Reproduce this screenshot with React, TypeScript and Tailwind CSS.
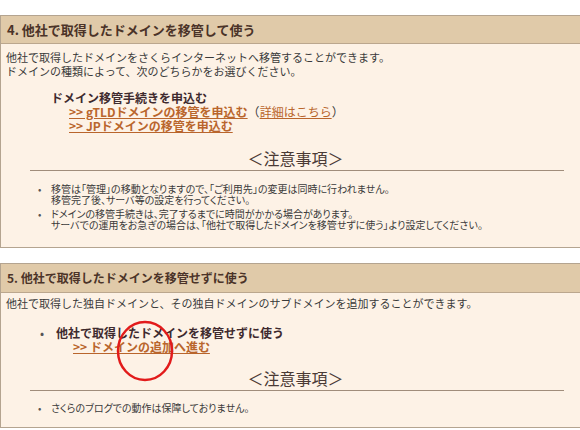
const font = "font-['Noto_Sans_CJK_JP','Noto_Sans',sans-serif]";

function Notice({ items }: { items: string[][] }) {
    return (
        <>
            <div className="mt-[15px] text-center text-[16px] leading-[20px] text-[#4a3a35]">＜注意事項＞</div>
            <div className="mt-[2px] ml-[24px] mr-[21px] h-px bg-[#a08d7b]" />
            <ul className="mt-[12px] flex flex-col gap-[3px] pl-[32px] text-[10px] leading-[11px] text-[#3a3a3a] [font-feature-settings:'palt']">
                {items.map((lines, i) => (
                    <li key={i} className="flex">
                        <span className="w-[13px] shrink-0 text-[#555]">•</span>
                        <span>
                            {lines.map((l, j) => (
                                <div key={j}>{l}</div>
                            ))}
                        </span>
                    </li>
                ))}
            </ul>
        </>
    );
}

export default function App() {
    return (
        <div className={`h-[430px] w-[580px] overflow-hidden bg-white pt-[15px] ${font}`}>
            <section className="w-[590px] border-y border-l border-[#b4a490] bg-[#fdf2e6]">
                <h2 className="flex h-[28px] items-center border-b border-[#bba78e] bg-[#e0caa9] px-[6px] text-[13px] font-bold text-[#4b3328]">
                    4. 他社で取得したドメインを移管して使う
                </h2>
                <div className="px-[5px] pt-[6px] pb-[17px]">
                    <p className="text-[11px] leading-[14px] text-[#3a3a3a]">
                        他社で取得したドメインをさくらインターネットへ移管することができます。
                        <br />
                        ドメインの種類によって、次のどちらかをお選びください。
                    </p>
                    <div className="mt-[13px] pl-[45px] text-[12px] leading-[14px]">
                        <div className="font-bold text-[#3e2a2e]">ドメイン移管手続きを申込む</div>
                        <div className="pl-[18px]">
                            <a className="font-bold text-[#b9652c] underline">&gt;&gt; gTLDドメインの移管を申込む</a>
                            <span className="text-[#3a3a3a]">（</span>
                            <a className="text-[#b9652c] underline">詳細はこちら</a>
                            <span className="text-[#3a3a3a]">）</span>
                        </div>
                        <div className="pl-[18px]">
                            <a className="font-bold text-[#b9652c] underline">&gt;&gt; JPドメインの移管を申込む</a>
                        </div>
                    </div>
                    <Notice
                        items={[
                            ["移管は「管理」の移動となりますので、「ご利用先」の変更は同時に行われません。", "移管完了後、サーバ等の設定を行ってください。"],
                            ["ドメインの移管手続きは、完了するまでに時間がかかる場合があります。", "サーバでの運用をお急ぎの場合は、「他社で取得したドメインを移管せずに使う」より設定してください。"],
                        ]}
                    />
                </div>
            </section>

            <section className="relative mt-[15px] w-[590px] border-y border-l border-[#b4a490] bg-[#fdf2e6]">
                <h2 className="flex h-[29px] items-center border-b border-[#bba78e] bg-[#e0caa9] px-[6px] text-[12px] font-bold text-[#4b3328]">
                    5. 他社で取得したドメインを移管せずに使う
                </h2>
                <div className="px-[5px] pt-[3px] pb-[14px]">
                    <p className="text-[11px] leading-[14px] text-[#3a3a3a]">
                        他社で取得した独自ドメインと、その独自ドメインのサブドメインを追加することができます。
                    </p>
                    <ul className="mt-[16px] pl-[34px] text-[12px] leading-[14px]">
                        <li className="flex">
                            <span className="w-[16px] shrink-0 text-[#555]">•</span>
                            <div>
                                <div className="font-bold text-[#3e2a2e]">他社で取得したドメインを移管せずに使う</div>
                                <div className="pl-[17px]">
                                    <a className="font-bold text-[#b9652c] underline">&gt;&gt; ドメインの追加へ進む</a>
                                </div>
                            </div>
                        </li>
                    </ul>
                    <div className="[&>div:first-child]:mt-[14px] [&>ul]:mt-[11px]">
                        <Notice items={[["さくらのブログでの動作は保障しておりません。"]]} />
                    </div>
                </div>
                <svg className="absolute left-[115px] top-[56px]" width="58" height="62" viewBox="0 0 58 62">
                    <ellipse cx="29" cy="31" rx="27" ry="29" fill="none" stroke="#e21b1b" strokeWidth="2.5" />
                </svg>
            </section>
        </div>
    );
}
